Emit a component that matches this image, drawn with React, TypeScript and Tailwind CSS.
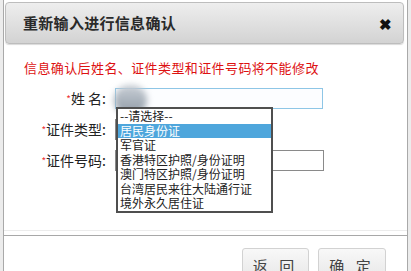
import React from 'react'

const OPTIONS = [
  '--请选择--',
  '居民身份证',
  '军官证',
  '香港特区护照/身份证明',
  '澳门特区护照/身份证明',
  '台湾居民来往大陆通行证',
  '境外永久居住证',
]

const FONT = { fontFamily: '"Noto Sans CJK SC", "Liberation Sans", sans-serif' }

function Label({ text }: { text: React.ReactNode }) {
  return (
    <div className="w-[102px] shrink-0 text-right text-[14px] leading-[21px] text-[#222]">
      <span className="text-[10px] align-top text-[#e33]">*</span>
      {text}:
    </div>
  )
}

export default function App() {
  return (
    <div
      className="w-[411px] h-[271px] overflow-hidden bg-[#ececec] pl-[3px] pr-[3px]"
      style={FONT}
    >
      <div className="relative h-[271px] border-x border-[#a9a9a9] bg-white pt-[2px]">
        {/* header */}
        <div className="ml-[1px] mr-[3px] h-[42px] flex items-center justify-between rounded-[4px] border border-[#bdbdbd] bg-gradient-to-b from-[#eeeeee] to-[#d3d3d3] pl-[17px] pr-[11px] shadow-[0_1px_1px_rgba(0,0,0,0.15)]">
          <span className="text-[15px] font-bold text-[#2a2a2a] tracking-[0.3px]">
            重新输入进行信息确认
          </span>
          <span className="text-[15px] font-black leading-none text-[#111]">✖</span>
        </div>

        {/* notice */}
        <p className="mt-[17px] ml-[20px] text-[13px] leading-[14px] tracking-[0.4px] text-[#d11]">
          信息确认后姓名、证件类型和证件号码将不能修改
        </p>

        {/* form */}
        <div className="mt-[13px] flex flex-col gap-[10px]">
          <div className="flex items-center gap-[9px]">
            <Label text="姓 名" />
            <div className="h-[21px] w-[208px] border border-[#8ec6e6] bg-[#fcfdff]" />
          </div>
          <div className="flex items-center gap-[9px]">
            <Label text="证件类型" />
            <div className="h-[21px] w-[157px] border border-[#888] bg-white" />
          </div>
          <div className="flex items-center gap-[9px]">
            <Label text="证件号码" />
            <div className="h-[21px] w-[209px] border border-[#8a8a8a] bg-white" />
          </div>
        </div>

        {/* footer */}
        <div className="mt-[59px] h-px bg-[#ececec]" />
        <div className="mt-[4px] h-px bg-[#a8a8a8]" />
        <div className="mt-[12px] flex justify-end gap-[9px] pr-[21px]">
          <button className="h-[36px] w-[67px] rounded-[3px] border border-[#d2d2d2] bg-gradient-to-b from-[#f8f8f8] to-[#e6e6e6] text-[15px] text-[#444] tracking-[4px]">
            返 回
          </button>
          <button className="h-[36px] w-[68px] rounded-[3px] border border-[#d2d2d2] bg-gradient-to-b from-[#f8f8f8] to-[#e6e6e6] text-[15px] text-[#444] tracking-[4px]">
            确 定
          </button>
        </div>

        {/* blurred avatar over name field */}
        <div className="absolute left-[110px] top-[85px] h-[30px] w-[33px] rounded-full bg-gradient-to-b from-[#c9cfd6] to-[#8f9aa6] blur-[3px]" />

        {/* open dropdown list */}
        <div className="absolute left-[112px] top-[107px] w-[157px] border-2 border-[#4f4f4f] bg-white">
          {OPTIONS.map((opt, i) => (
            <div
              key={opt}
              className={
                i === 1
                  ? 'h-[14.5px] bg-[#4ea6dc] pl-[2px] text-[12px] leading-[14.5px] text-white'
                  : 'h-[14.5px] pl-[2px] text-[12px] leading-[14.5px] text-[#222]'
              }
            >
              {opt}
            </div>
          ))}
        </div>
      </div>
    </div>
  )
}
